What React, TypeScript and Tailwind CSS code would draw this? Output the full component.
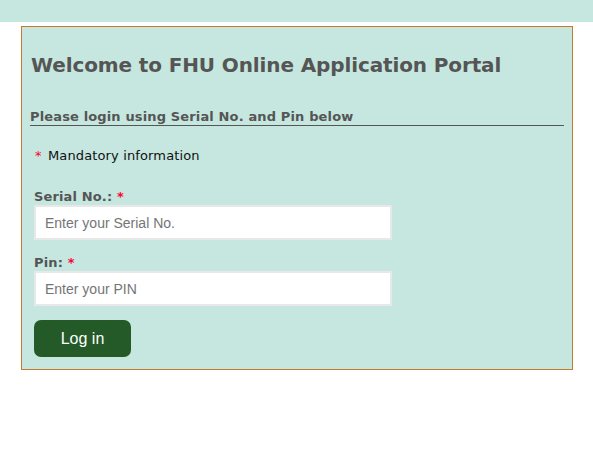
import React from "react";

export default function App() {
  return (
    <div className="min-h-[462px] bg-white" style={{ fontFamily: '"DejaVu Sans", Verdana, sans-serif' }}>
      <div className="h-[22px] bg-[#c5e7df]" />
      <div className="ml-[21px] mt-[4px] w-[552px] border border-[#c8792c] bg-[#c5e7df] px-[8px] pb-[12px]">
        <h1 className="mt-[24px] text-[20px] font-bold leading-[28px] tracking-[-0.12px] text-[#555555] pl-[1px]">
          Welcome to FHU Online Application Portal
        </h1>
        <h2 className="mt-[30px] border-b border-[#555555] text-[13px] font-bold leading-[16px] tracking-[0.14px] text-[#555555]">
          Please login using Serial No. and Pin below
        </h2>
        <div className="pl-[4px]">
          <p className="mt-[22px] text-[13px] leading-[16px] tracking-[0.14px] text-[#111111]">
            <span className="ml-[1px] mr-[2px] text-[#ff0033]">*</span> Mandatory information
          </p>
          <label className="mt-[25px] block text-[13px] font-bold leading-[16px] tracking-[0.14px] text-[#555555]">
            Serial No.: <span className="text-[#ff0033]">*</span>
          </label>
          <input
            type="text"
            placeholder="Enter your Serial No."
            className="block h-[35px] w-[358px] border-2 border-[#e8e8e8] bg-white px-[9px] text-[14px] text-[#333] placeholder:text-[#757575] outline-none"
            style={{ fontFamily: '"Liberation Sans", Arial, sans-serif' }}
          />
          <label className="mt-[15px] block text-[13px] font-bold leading-[16px] tracking-[0.14px] text-[#555555]">
            Pin: <span className="text-[#ff0033]">*</span>
          </label>
          <input
            type="password"
            placeholder="Enter your PIN"
            className="block h-[35px] w-[358px] border-2 border-[#e8e8e8] bg-white px-[9px] text-[14px] text-[#333] placeholder:text-[#757575] outline-none"
            style={{ fontFamily: '"Liberation Sans", Arial, sans-serif' }}
          />
          <button
            className="mt-[14px] flex h-[37px] w-[97px] items-center justify-center rounded-[7px] bg-[#235a27] text-[16px] text-white"
            style={{ fontFamily: '"Liberation Sans", Arial, sans-serif' }}
          >
            Log in
          </button>
        </div>
      </div>
    </div>
  );
}
